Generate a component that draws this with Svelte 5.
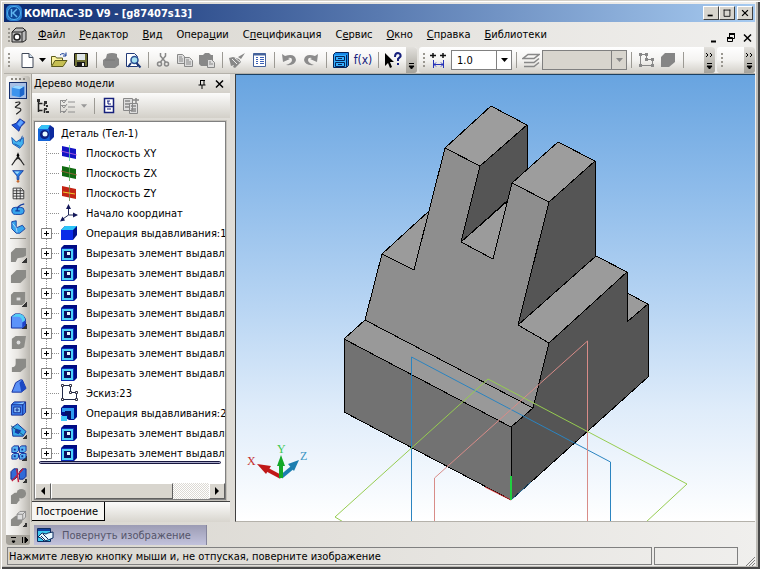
<script>
  const menus = [
    ['', 'Ф', 'айл'],
    ['', 'Р', 'едактор'],
    ['', 'В', 'ид'],
    ['Опера', 'ц', 'ии'],
    ['С', 'п', 'ецификация'],
    ['С', 'е', 'рвис'],
    ['', 'О', 'кно'],
    ['', 'С', 'правка'],
    ['', 'Б', 'иблиотеки']
  ];

  const standard = [
    ['new', 'Создать'],
    ['drop', 'Список шаблонов'],
    ['open', 'Открыть'],
    ['save', 'Сохранить'],
    null,
    ['print', 'Печать'],
    ['preview', 'Предварительный просмотр'],
    null,
    ['cut', 'Вырезать'],
    ['copy', 'Копировать'],
    ['paste', 'Вставить'],
    null,
    ['brush', 'Копировать свойства'],
    ['props', 'Свойства'],
    null,
    ['undo', 'Отменить'],
    ['redo', 'Повторить'],
    null,
    ['library', 'Менеджер библиотек'],
    ['fx', 'Переменные'],
    null,
    ['help', 'Справка']
  ];

  const panels = [
    ['part', 'Редактирование детали'],
    ['curve', 'Пространственные кривые'],
    ['surface', 'Поверхности'],
    ['aux', 'Вспомогательная геометрия'],
    ['measure', 'Измерения'],
    ['filter', 'Фильтры'],
    ['spec', 'Спецификация'],
    ['elements', 'Элементы оформления'],
    ['sheet', 'Листовое тело']
  ];

  const operations = [
    ['extrude', 'Операция выдавливания', true],
    ['block', 'Деталь-заготовка', false],
    ['hole', 'Вырезать', true],
    ['fillet', 'Скругление', true],
    ['hole2', 'Отверстие', false],
    ['rib', 'Ребро жесткости', false],
    ['draft', 'Уклон', false],
    ['shell', 'Оболочка', false],
    ['section', 'Сечение', true],
    ['array', 'Массив', true],
    ['mirror', 'Зеркальный массив', true],
    ['boolean', 'Булева операция', false],
    ['detail', 'Новая деталь', true]
  ];

  const cut = { icon: 'cutex', label: 'Вырезать элемент выдавливания', open: true };

  const tree = [
    { icon: 'xy', label: 'Плоскость XY' },
    { icon: 'zx', label: 'Плоскость ZX' },
    { icon: 'zy', label: 'Плоскость ZY' },
    { icon: 'origin', label: 'Начало координат' },
    { icon: 'boss', label: 'Операция выдавливания:1', open: true },
    cut, cut, cut, cut, cut, cut, cut,
    { icon: 'sketch', label: 'Эскиз:23' },
    { icon: 'bossadd', label: 'Операция выдавливания:2', open: true },
    cut, cut
  ];

  let step = '1.0';
  let active = 'part';
</script>

{#snippet icon(name)}
  <svg class="icon" viewBox="0 0 18 18" aria-hidden="true"><use href="#{name}" /></svg>
{/snippet}

<svg class="sprite" aria-hidden="true">
  <symbol id="new" viewBox="0 0 18 18"><path d="M4 2.500h7l4 4v10H4z" fill="#fff" stroke="#404858" /><path d="M11 2.500v4h4" fill="#cde" stroke="#404858" /></symbol>
  <symbol id="drop" viewBox="0 0 18 18"><path d="M5 7h7l-3.500 4z" /></symbol>
  <symbol id="open" viewBox="0 0 18 18"><path d="M1.500 14.500v-9h4l1 1.500h6v3" fill="#fbf3a0" stroke="#5b5a1c" /><path d="M1.500 15.500l3.500-6h12l-4 6z" fill="#c6bf52" stroke="#5b5a1c" /><path d="M10 4q3-3 6 .5M16 1.500v3.500h-3" fill="none" stroke="#123a96" /></symbol>
  <symbol id="save" viewBox="0 0 18 18"><path d="M2.500 2.500h13v13h-12l-1-1z" fill="#6f7034" stroke="#111" /><path d="M5 3h8v6H5z" fill="#dfe6e8" /><path d="M5 11h8v5H5z" fill="#181818" /><path d="M10 12h2v3h-2z" fill="#eee" /></symbol>
  <symbol id="print" viewBox="0 0 18 18"><path d="M5 3q5-2 10 0v3l2 2v6l-4 3H3l-2-3V9l3-2z" fill="#888" /><path d="M3 9h10" stroke="#777" /></symbol>
  <symbol id="preview" viewBox="0 0 18 18"><path d="M2.500 2.500h8l3 3v10h-11z" fill="#fff" stroke="#223a78" /><circle cx="10.500" cy="9" r="3.500" fill="#a9e2f2" stroke="#2b5196" stroke-width="1.500" /><path d="M12.500 12l4 4.500M7 12l-3 4" stroke="#1c3878" stroke-width="2" /></symbol>
  <symbol id="cut" viewBox="0 0 18 18"><path d="M6.500 2v3l5 6M11.500 2v3l-5 6" fill="none" stroke="#888" stroke-width="1.500" /><circle cx="5.500" cy="13" r="2" fill="none" stroke="#888" stroke-width="1.500" /><circle cx="12.500" cy="13" r="2" fill="none" stroke="#888" stroke-width="1.500" /></symbol>
  <symbol id="copy" viewBox="0 0 18 18"><path d="M1.500 3.500h5l2 2v7h-7zM8.500 6.500h5l3 3v6h-8z" fill="#ddd" stroke="#888" /><path d="M3 6h3M3 8h4M3 10h4M10 9h3M10 11h5M10 13h5" stroke="#888" /></symbol>
  <symbol id="paste" viewBox="0 0 18 18"><path d="M1 4h4l2-2h4l2 2h2v11H3l-2-2z" fill="#888" /><path d="M9.500 8.500h4l3 3v5h-7z" fill="#ddd" stroke="#888" /><path d="M11 11h2M11 13h4" stroke="#888" /></symbol>
  <symbol id="brush" viewBox="0 0 18 18"><path d="M17 2l-4 6-3-2z" fill="#888" /><path d="M1 7l4-1 6 2 2 3-6 6-2-1 1-2-3 1z" fill="#888" /><path d="M4 8l5 5M7 7l5 4" stroke="#eee" /></symbol>
  <symbol id="props" viewBox="0 0 18 18"><path d="M3.500 2.500h12v13h-12z" fill="#fff" stroke="#45629b" /><path d="M3.500 3.500h12" stroke="#45629b" stroke-width="2" /><path d="M6 6.500h2M6 8.500h2M6 10.500h2M6 12.500h2M10 6.500h4M10 8.500h4M10 10.500h4M10 12.500h4" stroke="#3c62b8" /></symbol>
  <symbol id="undo" viewBox="0 0 18 18"><path d="M2 3l1 8 7-3-2-1q4-1 4 2t-6 5q9 1 10-5-1-7-11-4z" fill="#8b8b8b" /></symbol>
  <symbol id="redo" viewBox="0 0 18 18"><path d="M16 3l-1 8-7-3 2-1q-4-1-4 2t6 5q-9 1-10-5 1-7 11-4z" fill="#8b8b8b" /></symbol>
  <symbol id="library" viewBox="0 0 18 18"><path d="M1.500 3.500l2-2h13v13l-2 2h-13z" fill="#1688e8" stroke="#06245a" /><path d="M2 4h12v12H2z" fill="#36b0ff" /><path d="M3.500 5.500h9v4h-9zM3.500 11.500h9v4h-9zM6 7.500h4M6 13.500h4M14.500 4v12" fill="none" stroke="#06245a" /></symbol>
  <symbol id="help" viewBox="0 0 18 18"><path d="M1 2v13l3-3 2 5 2-1-2-5h4z" /><path d="M11 6q0-4 3-4 3 .5 2.500 3.500L14 8v2M14 12v2" fill="none" stroke="#16207c" stroke-width="2" /></symbol>
  <symbol id="step" viewBox="0 0 18 18"><path d="M1 4.500h6M4 2v5M11 4.500h6M14 2v5" stroke="#111" stroke-width="1.500" /><path d="M4.500 9v8M14.500 9v8M5 13.500h9M7 11.500l-2 2 2 2M12 11.500l2 2-2 2" fill="none" stroke="#2632b8" /></symbol>
  <symbol id="layers" viewBox="0 0 18 18"><path d="M6 3.500h11l-5 4H1zM2 11.500h10l5-4M2 15.500h10l5-4" fill="none" stroke="#888" stroke-width="1.500" /></symbol>
  <symbol id="contour" viewBox="0 0 18 18"><path d="M3.500 3.500h6v5h6v6h-12z" fill="none" stroke="#888" /><path d="M2 2h3v3H2zM8 2h3v3H8zM8 7h3v3H8zM14 7h3v3h-3zM14 13h3v3h-3zM2 13h3v3H2z" fill="#888" /></symbol>
  <symbol id="solid" viewBox="0 0 18 18"><path d="M2 6l4-4h10v9l-6 5H2z" fill="#858585" /></symbol>

  <symbol id="part" viewBox="0 0 18 18"><path d="M2 5l4-2 10 1v9l-5 3-9-2z" fill="#3c94ee" /><path d="M2 5l4-2 10 1-5 3z" fill="#9ad8ff" /><path d="M11 7l5-3v9l-5 3z" fill="#1d65ca" /></symbol>
  <symbol id="curve" viewBox="0 0 18 18"><path d="M6 3q6-2 5 1l-5 4q0 1 3 1 4 0 3 3l-5 4" fill="none" stroke="#222" stroke-width="1.300" /></symbol>
  <symbol id="surface" viewBox="0 0 18 18"><path d="M2 9l5-2 4-5 6 4-5 5-2 5z" fill="#1f57db" stroke="#122a88" /><path d="M8 8l4-5 3 3-4 5z" fill="#5fa4ff" /></symbol>
  <symbol id="aux" viewBox="0 0 18 18"><path d="M2 4l5 5 8-5v7l-4 5-8-5z" fill="#42b3ef" stroke="#1651ad" /><path d="M14 2l-3 7M5 11l6 3" stroke="#1651ad" /></symbol>
  <symbol id="measure" viewBox="0 0 18 18"><path d="M9 2v4M9 6L2 16M9 6l7 10M5 11l4-3 4 3" fill="none" stroke="#222" stroke-width="1.300" /><circle cx="9" cy="5" r="1.500" /></symbol>
  <symbol id="filter" viewBox="0 0 18 18"><path d="M3 3h12l-5 6v4H8V9z" fill="#2d83e6" stroke="#123b9e" /><path d="M5 4h6L8 7z" fill="#9dddfc" /><circle cx="9" cy="15" r="1.500" fill="#c66a30" /></symbol>
  <symbol id="spec" viewBox="0 0 18 18"><path d="M3.500 3.500h9l3 3v9h-12zM3.500 6.500h12M3.500 9.500h12M3.500 12.500h12M7.500 4v12M11.500 4v12" fill="#eee" stroke="#333" /></symbol>
  <symbol id="elements" viewBox="0 0 18 18"><path d="M2 9q0-3 4-3h6q4 0 4 4t-4 4H6q-4 0-4-5z" fill="#39a6ed" stroke="#123b9e" /><path d="M8 10q-1-6 8-8M6 10h5" fill="none" stroke="#123b9e" stroke-width="1.500" /></symbol>
  <symbol id="sheet" viewBox="0 0 18 18"><path d="M2 3l5-1v8l7-3 3 4-6 5H7l-5-5z" fill="#39a6ed" stroke="#123b9e" /><path d="M7 10l-4-5M7 10l1 5" stroke="#bdf" /></symbol>
  <symbol id="extrude" viewBox="0 0 18 18"><path d="M1 7l5-5h11v8l-3 2-6 1-2 4H1z" fill="#8b8b87" /></symbol>
  <symbol id="block" viewBox="0 0 18 18"><path d="M1 8l6-6h10v8l-6 6H1z" fill="#8b8b87" /></symbol>
  <symbol id="hole" viewBox="0 0 18 18"><path d="M1 5l3-3h12v11l-3 3H1z" fill="#8b8b87" /><path d="M7 8h4v3H7z" fill="#ddd" /></symbol>
  <symbol id="fillet" viewBox="0 0 18 18"><path d="M1.500 5l4-3h5q6 2 6 8v4l-3 3h-12z" fill="#5c93fa" stroke="#102c9a" /><path d="M2 5l4-3h5q5 2 5 7l-3 2q0-6-5-6z" fill="#53cdf4" /><path d="M13 11l3-2v5l-3 3z" fill="#1f44cb" /></symbol>
  <symbol id="hole2" viewBox="0 0 18 18"><path d="M2 5l4-3h11l-2 12-4 2H2z" fill="#8b8b87" /><circle cx="9" cy="9" r="2" fill="#ddd" /></symbol>
  <symbol id="rib" viewBox="0 0 18 18"><path d="M6 3h11v9l-6 5H2v-5q4 0 4-4z" fill="#8b8b87" /></symbol>
  <symbol id="draft" viewBox="0 0 18 18"><path d="M2 15L6 5l5-3h2l4 9-5 4z" fill="#5b91f6" stroke="#132e9c" /><path d="M13 2l4 9-5 4-2-10z" fill="#1c49c4" /></symbol>
  <symbol id="shell" viewBox="0 0 18 18"><path d="M1.500 5l3-3h12v11l-3 3h-12z" fill="#3f82ee" stroke="#10278e" /><path d="M4 7.500h7v6H4zM6.500 9.500h2v2h-2zM13.500 5v11M2 5h12l2-3" fill="#8fc9ff" stroke="#10278e" /></symbol>
  <symbol id="section" viewBox="0 0 18 18"><path d="M2 6l6-4 9 8-3 5H3z" fill="#38a9e8" stroke="#143096" /><path d="M6 7l6 2-3 4-4-2z" fill="#1438ac" /><path d="M1 4l13 10" stroke="#174f76" /></symbol>
  <symbol id="array" viewBox="0 0 18 18"><path d="M2 4l2-2h5v5l-2 2H2zM10 4l2-2h5v5l-2 2h-5zM2 12l2-2h5v4l-2 2H2zM10 12l2-2h5v4l-2 2h-5z" fill="#58b5f3" stroke="#122c98" /><path d="M4 6h2M12 6h2M4 13h2M12 13h2" stroke="#122c98" stroke-width="2" /></symbol>
  <symbol id="mirror" viewBox="0 0 18 18"><path d="M1 6l3-3h4v8l-3 3H1zM10 6l3-3h4v8l-3 3h-4z" fill="#306bd8" stroke="#122684" /><path d="M2 16L14 3M7 3l2 14" stroke="#c02040" stroke-width="1.500" /></symbol>
  <symbol id="boolean" viewBox="0 0 18 18"><path d="M1 8l4-3h5v8l-3 4H1z" fill="#8b8b87" /><circle cx="12" cy="6" r="5" fill="#8b8b87" /></symbol>
  <symbol id="detail" viewBox="0 0 18 18"><path d="M1 10l5-4h7v7l-4 4H1z" fill="#8b8b87" /><path d="M7.500 4.500l3-3h6v6l-3 3h-6zM7.500 4.500h6v6M13.500 4.500l3-3" fill="#ddd" stroke="#888" /></symbol>

  <symbol id="root" viewBox="0 0 18 18"><path d="M1 5l4-4h8l4 3v9l-4 4H1z" fill="#0d2a9e" /><path d="M1 5h11l1 12H1z" fill="#1464d8" /><path d="M1 5l4-4h8l-2 4z" fill="#35c2f6" /><circle cx="7.500" cy="10.500" r="4.500" fill="#0b1f80" /><circle cx="8" cy="10" r="2.500" fill="#e6fbff" /></symbol>
  <symbol id="xy" viewBox="0 0 18 18"><path d="M2 2l14 3v10L2 12z" fill="#1414c4" /><path d="M9.500 1v16" stroke="#5fd0a0" stroke-width=".8" /><path d="M1 7l16 4" stroke="#c86ae0" stroke-width=".8" /></symbol>
  <symbol id="zx" viewBox="0 0 18 18"><path d="M2 2l14 3v10L2 12z" fill="#126a12" /><path d="M9.500 1v16" stroke="#4fae4f" stroke-width=".8" /><path d="M1 7l16 4" stroke="#b06040" stroke-width=".8" /></symbol>
  <symbol id="zy" viewBox="0 0 18 18"><path d="M2 2l14 3v10L2 12z" fill="#c32414" /><path d="M9.500 1v16" stroke="#6c8a50" stroke-width=".8" /><path d="M3 8l12 2" stroke="#f2cc30" /></symbol>
  <symbol id="origin" viewBox="0 0 18 18"><path d="M8.500 2v9h8M8.500 11l-7 5" fill="none" stroke="#222a58" /><path d="M8.500 0L6 5h5zM18 11l-5-2.500v5zM0 17.500l5-1-2.500-4z" fill="#14185a" /></symbol>
  <symbol id="boss" viewBox="0 0 18 18"><path d="M1 6l4-4h12v9l-4 5H1z" fill="#00108c" /><path d="M1 6l4-4h12l-4 4z" fill="#2cc4f8" /><path d="M1 6h12v10H1z" fill="#0a2ce8" /></symbol>
  <symbol id="cutex" viewBox="0 0 18 18"><path d="M1 4l3-3h13v13l-3 3H1z" fill="#000c84" /><path d="M1 4h13v13H1z" fill="#0b2cb4" /><path d="M3 6h9v9H3z" fill="#060c60" stroke="#4fd2fa" stroke-width="2" /><path d="M7 8h3v3H7z" fill="#e8faff" /></symbol>
  <symbol id="bossadd" viewBox="0 0 18 18"><path d="M1 4l3-3h13v12l-3 3H9L1 11z" fill="#00108c" /><path d="M2 4h12v11H9V8H2z" fill="#2f9cf0" /><path d="M5 7h6v8H8v-4H5z" fill="#061064" /><path d="M1 12h6v5H1z" fill="#3fc8f8" /></symbol>
  <symbol id="sketch" viewBox="0 0 18 18"><path d="M2.500 1.500h8v7h6v7h-14z" fill="none" stroke="#222a4a" /><path d="M1.500 .500h2v2h-2zM9.500 .500h2v2h-2zM9.500 7.500h2v2h-2zM15.500 7.500h2v2h-2zM15.500 14.500h2v2h-2zM1.500 14.500h2v2h-2z" fill="#fff" stroke="#334" /></symbol>
  <symbol id="treeview" viewBox="0 0 18 18"><path d="M4.500 3v12M4.500 6.500h4M4.500 13.500h4M10.500 6v3M10.500 12v4" fill="none" stroke="#222" stroke-width="1.500" /><path d="M3 2h3v3H3zM10 4h3v3h-3zM12 8h2v2h-2zM10 11h3v2h-3zM12 14h3v2h-3z" fill="#333" /></symbol>
  <symbol id="checks" viewBox="0 0 18 18"><path d="M1.500 3v13M2 3.500h5M2 8.500h5M2 14.500h5M9 5h7M9 10h7M9 15h7" stroke="#909090" /><path d="M3 4l2 2 3-4M3 9l2 2 3-4M3 14l2 2 3-4" fill="none" stroke="#909090" /></symbol>
  <symbol id="doc" viewBox="0 0 18 18"><path d="M4.500 1.500h9v14h-9zM4.500 9.500h9" fill="#fff" stroke="#16207c" stroke-width="1.500" /><path d="M7 4h3M8 4v3h3M7 12h4" fill="none" stroke="#16207c" /></symbol>
  <symbol id="report" viewBox="0 0 18 18"><path d="M1.500 1.500h9v12h-9zM7.500 6.500h8v10h-8z" fill="#ddd" stroke="#888" /><path d="M3 4h5M3 7h5M3 10h5M9 9h5M9 12h5M9 14h5M14 1v5M11 3h6" stroke="#888" stroke-width="1.500" /></symbol>
</svg>

<div class="window">
  <header class="titlebar">
    <svg class="logo" viewBox="0 0 16 16" aria-hidden="true">
      <rect width="16" height="16" rx="5" fill="#2b7fd0" />
      <circle cx="8" cy="8" r="6.500" fill="#0d4597" stroke="#4db0ef" />
      <path d="M5.500 4v8M11 4L7 8l4 4" fill="none" stroke="#61b6f0" stroke-width="1.500" />
    </svg>
    <h1>КОМПАС-3D V9 - [g87407s13]</h1>
    <div class="window-buttons">
      <button aria-label="Свернуть"><svg viewBox="0 0 12 10"><path d="M2 8h6" stroke="#000" stroke-width="2" /></svg></button>
      <button aria-label="Развернуть"><svg viewBox="0 0 12 10"><path d="M2 1.500h8M2.500 1v8h7V1" fill="none" stroke="#000" /></svg></button>
      <button class="close" aria-label="Закрыть"><svg viewBox="0 0 12 10"><path d="M2.500 1.500l7 7M9.500 1.500l-7 7" stroke="#000" stroke-width="1.500" /></svg></button>
    </div>
  </header>

  <nav class="menubar">
    <i class="grip"></i>
    <svg class="doc-icon" viewBox="0 0 16 16" aria-hidden="true">
      <path d="M1 5l4-4h7l3 3v9l-3 2H1z" fill="#bbb" stroke="#222" />
      <path d="M1 5h10v10M11 5l4-2" fill="none" stroke="#222" />
      <circle cx="6" cy="10" r="3" fill="#fff" stroke="#222" stroke-width="1.500" />
    </svg>
    {#each menus as [before, key, after]}
      <button class="menu">{before}<u>{key}</u>{after}</button>
    {/each}
    <div class="mdi-buttons">
      <button aria-label="Свернуть документ"><svg viewBox="0 0 10 10"><path d="M1 8.500h5" stroke="#000" stroke-width="2" /></svg></button>
      <button aria-label="Восстановить документ"><svg viewBox="0 0 10 10"><path d="M3 1h6M1 5h5" stroke="#000" stroke-width="2" /><path d="M3.500 4V1.500h5v4H7M1.500 4.500h5v4h-5z" fill="none" stroke="#000" /></svg></button>
      <button aria-label="Закрыть документ"><svg viewBox="0 0 10 10"><path d="M2 1.500l7 7M9 1.500l-7 7" stroke="#000" stroke-width="1.500" /></svg></button>
    </div>
  </nav>

  <div class="toolbars">
    <div class="toolbar standard">
      <i class="grip"></i>
      {#each standard as item}
        {#if !item}
          <i class="separator"></i>
        {:else if item[0] === 'fx'}
          <button class="tool fx" title={item[1]}>f(x)</button>
        {:else}
          <button class="tool {item[0]}" aria-label={item[1]}>{@render icon(item[0])}</button>
        {/if}
      {/each}
      <button class="more" aria-label="Другие кнопки"><svg viewBox="0 0 9 22"><path d="M2 14.500h5M2 17h5l-2.500 3z" stroke="#000" /></svg></button>
    </div>
    <div class="toolbar state">
      <i class="grip"></i>
      <button class="tool" aria-label="Шаг курсора">{@render icon('step')}</button>
      <div class="combo step">
        <select bind:value={step} aria-label="Текущий шаг курсора"><option>1.0</option><option>5.0</option></select>
        <svg viewBox="0 0 14 18"><path d="M4 7h7l-3.500 4z" /></svg>
      </div>
      <i class="separator"></i>
      <button class="tool" aria-label="Слои">{@render icon('layers')}</button>
      <div class="combo layer">
        <select disabled aria-label="Текущий слой"><option></option></select>
        <svg viewBox="0 0 14 18"><path d="M4 7h7l-3.500 4z" fill="#888" /></svg>
      </div>
      <i class="separator"></i>
      <button class="tool" aria-label="Эскиз">{@render icon('contour')}</button>
      <button class="tool" aria-label="Тело">{@render icon('solid')}</button>
      <i class="separator"></i>
      <button class="more" aria-label="Другие кнопки"><svg viewBox="0 0 9 22"><path d="M1 4l2 2-2 2M5 4l2 2-2 2" fill="none" stroke="#000" /><path d="M2 14.500h5M2 17h5l-2.500 3z" stroke="#000" /></svg></button>
    </div>
    <div class="toolbar view">
      <i class="grip"></i>
      <button class="more" aria-label="Другие кнопки"><svg viewBox="0 0 9 22"><path d="M1 4l2 2-2 2M5 4l2 2-2 2" fill="none" stroke="#000" /><path d="M2 14.500h5M2 17h5l-2.500 3z" stroke="#000" /></svg></button>
    </div>
  </div>

  <div class="body">
    <aside class="compact">
      <i class="dots"></i>
      {#each panels as [name, label]}
        <button class="panel-button" class:active={active === name} aria-label={label} on:click={() => (active = name)}>{@render icon(name)}</button>
      {/each}
      <i class="rule"></i>
      {#each operations as [name, label, more]}
        <button class="op-button" class:has-more={more} aria-label={label}>{@render icon(name)}</button>
      {/each}
      <div class="compact-end">
        <svg viewBox="0 0 24 10" aria-hidden="true"><path d="M5 2.500h5M6 6h3l-1.500 2zM16.500 2v6M19 2l3 3-3 3z" stroke="#000" /></svg>
      </div>
    </aside>

    <div class="work">
      <div class="split">
        <section class="tree-panel">
          <div class="panel-title">
            <h2>Дерево модели</h2>
            <button aria-label="Закрепить"><svg viewBox="0 0 10 10"><path d="M3 1.500h5M3.500 1v5M7 1v5M1.500 6h7M5 6v4" fill="none" stroke="#000" /></svg></button>
            <button aria-label="Закрыть панель"><svg viewBox="0 0 10 10"><path d="M2 1.500l7 7M9 1.500l-7 7" stroke="#000" stroke-width="1.500" /></svg></button>
          </div>
          <div class="panel-tools">
            <button class="tool" aria-label="Отображение структуры">{@render icon('treeview')}</button>
            <button class="tool wide" aria-label="Состав дерева">{@render icon('checks')}<svg class="tiny" viewBox="0 0 8 4"><path d="M0 0h7L3.500 4z" fill="#999" /></svg></button>
            <i class="separator"></i>
            <button class="tool" aria-label="Дополнительное окно">{@render icon('doc')}</button>
            <button class="tool" aria-label="Отношения">{@render icon('report')}</button>
          </div>
          <div class="tree">
            <div class="tree-scroll">
              <div class="root-row">{@render icon('root')}<span>Деталь (Тел-1)</span></div>
              <ul>
                {#each tree as node}
                  <li>
                    {#if node.open}
                      <button class="expander" aria-label="Развернуть узел"><svg viewBox="0 0 11 11"><path d="M.5.5h10v10H.5z" fill="#fff" stroke="#808080" /><path d="M3 5.500h5M5.500 3v5" stroke="#000" /></svg></button>
                    {:else}
                      <i class="joint"></i>
                    {/if}
                    <i class="branch"></i>
                    {@render icon(node.icon)}
                    <span>{node.label}</span>
                  </li>
                {/each}
              </ul>
              <div class="end-line"></div>
            </div>
            <div class="scrollbar">
              <button aria-label="Прокрутить влево"><svg viewBox="0 0 8 8"><path d="M6 0v8L2 4z" /></svg></button>
              <div class="track"><div class="thumb"></div></div>
              <button aria-label="Прокрутить вправо"><svg viewBox="0 0 8 8"><path d="M2 0v8l4-4z" /></svg></button>
            </div>
          </div>
          <div class="tabs"><button class="tab">Построение</button></div>
        </section>

        <main class="viewport">
          <svg viewBox="236 75 519 447" preserveAspectRatio="xMinYMin slice" role="img" aria-label="Модель детали">
            <g stroke="#000" stroke-linejoin="round" shape-rendering="crispEdges">
              <path d="M382 254L429 211L414 270z" fill="#9b9b9b" />
              <path d="M461 242L510 199L493 259z" fill="#9b9b9b" />
              <path d="M527 125V170L512 184L508 200L461 242L480 166z" fill="#555" />
              <path d="M491 106L527 125L480 166L445 148z" fill="#9d9d9d" />
              <path d="M595 161L596 256L518 325L549 202z" fill="#555" />
              <path d="M558 142L595 161L549 202L512 183z" fill="#9d9d9d" />
              <path d="M627 293L648 304L627 322z" fill="#9b9b9b" />
              <path d="M445 148L480 166L461 242L493 259L512 183L549 202L518 325L549 343L533 408L365 320L382 254L414 270z" fill="#8e8e8e" />
              <path d="M518 325L596 256L627 272L549 343z" fill="#9b9b9b" />
              <path d="M549 343L627 272V322L648 304V377L511 500V427L533 408z" fill="#555" />
              <path d="M344 339L365 320L533 408L511 427z" fill="#999" />
              <path d="M344 339L511 427V500L344 412z" fill="#727272" />
            </g>
            <g fill="none">
              <path d="M411.500 523V357L610.500 462V523" stroke="#2b84c0" />
              <path d="M434.500 523V478L587.500 341V523" stroke="#d88c88" />
              <path d="M345 523L335 517L488 379L687 484L645 523" stroke="#96cc50" />
              <path d="M511 500L485 487" stroke="#d03030" />
              <path d="M511 500L531 482" stroke="#2b6f9c" />
              <path d="M511 500V476" stroke="#20d040" stroke-width="2" />
            </g>
            <g class="axes">
              <path d="M281 477L266 469" stroke="#c01818" stroke-width="4" />
              <path d="M257 464L271 466L266 474z" fill="#c01818" />
              <path d="M281 477L293 467" stroke="#1c7eb0" stroke-width="4" />
              <path d="M299 460L288 464L294 471z" fill="#1c7eb0" />
              <path d="M281 478V463" stroke="#14a828" stroke-width="4" />
              <path d="M281 455L277 466H285z" fill="#14a828" />
              <text x="247" y="465" fill="#c43030">X</text>
              <text x="277" y="453" fill="#3cc850">Y</text>
              <text x="300" y="460" fill="#3c96c4">Z</text>
            </g>
          </svg>
        </main>
      </div>

      <div class="property-bar">
        <button class="property-tab">
          <svg viewBox="0 0 17 16" aria-hidden="true"><path d="M.5 1.500h13v13H.5z" fill="#3cc8f0" stroke="#0c2c60" /><path d="M1 2h12v2H1z" fill="#1040a0" /><path d="M1 10l4-4 4 1 2-1 5-1v6l-5 2-4 1-3-3z" fill="#e8f8ff" stroke="#0c2c60" /><path d="M4 9l4 4M6 7l5 5" stroke="#0c2c60" /></svg>
          Повернуть изображение
        </button>
      </div>
    </div>
  </div>

  <footer class="statusbar">
    <p>Нажмите левую кнопку мыши и, не отпуская, поверните изображение</p>
    <div class="status-cell"></div>
    <svg class="resize" viewBox="0 0 10 10" aria-hidden="true"><path d="M1 10l9-9M4 10l6-6M7 10l3-3" stroke="#808080" /></svg>
  </footer>
</div>

<style>
  :global(body) {
    margin: 0;
    background: #d8d5ce;
  }
  .window {
    box-sizing: border-box;
    height: 100vh;
    min-height: 560px;
    display: flex;
    flex-direction: column;
    padding: 4px 5px 3px 4px;
    overflow: hidden;
    font: 11px 'DejaVu Sans Condensed', 'DejaVu Sans', sans-serif;
    color: #000;
    background: linear-gradient(90deg, #d8d5ce, #f0efed);
    box-shadow: inset 1px 1px #d4d0c8, inset 2px 2px #fff, inset -2px -2px #484848, inset -4px -3px #bcbab5;
  }
  button {
    padding: 0;
    border: 0;
    background: none;
    font: inherit;
    color: inherit;
  }
  svg {
    display: block;
  }
  .sprite {
    position: absolute;
    width: 0;
    height: 0;
  }
  .icon {
    flex: none;
    width: 18px;
    height: 18px;
  }
  .grip {
    flex: none;
    width: 2px;
    height: 14px;
    margin: 0 6px 0 4px;
    background: repeating-linear-gradient(#9a9790 0 2px, transparent 2px 4px);
  }
  .separator {
    flex: none;
    width: 1px;
    height: 16px;
    margin: 0 3px 0 4px;
    background: #9c9a94;
  }

  .titlebar {
    flex: none;
    height: 18px;
    display: flex;
    align-items: center;
    gap: 2px;
    padding: 0 2px;
    background: linear-gradient(90deg, #0c2a70, #a6caf0);
  }
  .logo {
    width: 16px;
    height: 16px;
  }
  .titlebar h1 {
    flex: 1;
    margin: 0;
    font-size: 11px;
    font-weight: bold;
    color: #fff;
  }
  .window-buttons {
    display: flex;
  }
  .window-buttons button {
    box-sizing: border-box;
    width: 16px;
    height: 14px;
    padding: 1px 2px;
    background: #d8d5ce;
    border: 1px solid;
    border-color: #fff #404040 #404040 #fff;
  }
  .window-buttons svg {
    width: 10px;
    height: 10px;
  }
  .window-buttons .close {
    margin-left: 2px;
  }

  .menubar {
    flex: none;
    height: 25px;
    display: flex;
    align-items: center;
  }
  .doc-icon {
    width: 16px;
    height: 16px;
    margin-right: 11px;
  }
  .menubar .grip {
    margin-right: 1px;
  }
  .menu {
    margin-right: 14px;
  }
  .mdi-buttons {
    display: flex;
    gap: 6px;
    margin: 6px 3px 0 auto;
  }
  .mdi-buttons svg,
  .panel-title svg {
    width: 10px;
    height: 10px;
  }

  .toolbars {
    flex: none;
    height: 26px;
    display: flex;
    gap: 2px;
    border-bottom: 1px solid #b4b1aa;
  }
  .toolbar {
    display: flex;
    align-items: center;
    background: linear-gradient(#fff, #f4f3f1 50%, #d3d0c9);
    border-radius: 3px;
  }
  .toolbar.state {
    flex: 1;
  }
  .toolbar.view {
    width: 38px;
  }
  .tool {
    flex: none;
    width: 22px;
    height: 22px;
    display: flex;
    align-items: center;
    justify-content: center;
  }
  .tool.drop {
    width: 10px;
  }
  .tool.fx {
    font-size: 12px;
    color: #14207c;
  }
  .more {
    align-self: stretch;
    width: 11px;
    margin-left: auto;
    padding: 1px;
    background: linear-gradient(#e2e0dc, #a5a29a);
    border-radius: 0 3px 3px 0;
  }
  .standard .more {
    margin-left: 2px;
  }
  .more svg {
    width: 9px;
    height: 22px;
  }
  .state .grip {
    margin-right: 2px;
  }
  .combo {
    box-sizing: border-box;
    height: 20px;
    display: grid;
    background: #fff;
    border: 1px solid #808080;
  }
  .combo.step {
    width: 61px;
    margin-left: 2px;
  }
  .combo.layer {
    width: 85px;
    background: #d8d5ce;
  }
  .combo select {
    grid-area: 1 / 1;
    appearance: none;
    margin: 0;
    padding: 0 16px 0 5px;
    border: 0;
    background: none;
    font: inherit;
    color: #000;
  }
  .combo svg {
    grid-area: 1 / 1;
    justify-self: end;
    width: 14px;
    height: 18px;
    border-left: 1px solid #808080;
    pointer-events: none;
  }

  .body {
    flex: 1;
    min-height: 0;
    display: flex;
  }
  .compact {
    flex: none;
    width: 24px;
    margin: 2px 1px 1px 2px;
    display: flex;
    flex-direction: column;
    align-items: center;
    background: linear-gradient(90deg, #fbfbfa, #e8e6e2 50%, #b9b6af);
    border-radius: 3px;
    overflow: hidden;
  }
  .dots {
    flex: none;
    width: 14px;
    height: 2px;
    margin: 2px 0;
    background: repeating-linear-gradient(90deg, #8c8982 0 2px, transparent 2px 4px);
  }
  .panel-button {
    box-sizing: border-box;
    flex: none;
    width: 18px;
    height: 17px;
  }
  .panel-button .icon {
    width: 16px;
    height: 16px;
    margin: 0 auto;
  }
  .panel-button.active {
    background: #a8bfe4;
    outline: 1px solid #16306e;
    outline-offset: -1px;
  }
  .rule {
    flex: none;
    width: 16px;
    height: 1px;
    margin: 3px 0;
    background: #8c8982;
  }
  .op-button {
    flex: none;
    width: 20px;
    height: 22px;
    padding-top: 2px;
  }
  .op-button .icon {
    margin: 0 auto;
    width: 17px;
    height: 17px;
  }
  .has-more {
    background: linear-gradient(135deg, transparent 50%, #333 50%) right 1px bottom 1px / 5px 5px no-repeat;
  }
  .compact-end {
    align-self: stretch;
    margin-top: auto;
    height: 10px;
    background: #a5a29a;
  }
  .compact-end svg {
    width: 24px;
    height: 10px;
  }

  .work {
    flex: 1;
    min-width: 0;
    display: flex;
    flex-direction: column;
  }
  .split {
    flex: 1;
    min-height: 0;
    display: flex;
    gap: 5px;
  }
  .tree-panel {
    flex: none;
    width: 199px;
    display: flex;
    flex-direction: column;
    border-left: 1px solid #a5a29a;
    box-sizing: border-box;
  }
  .panel-title {
    flex: none;
    height: 19px;
    display: flex;
    align-items: center;
    gap: 7px;
    padding: 0 6px 0 2px;
    background: linear-gradient(#f2f1ef, #d3d0c9);
  }
  .panel-title h2 {
    flex: 1;
    margin: 0;
    font-size: 11px;
    font-weight: normal;
  }
  .panel-tools {
    flex: none;
    height: 25px;
    display: flex;
    align-items: center;
    background: linear-gradient(#fbfbfa, #d3d0c9);
  }
  .panel-tools .wide {
    width: 38px;
    gap: 4px;
  }
  .panel-tools .separator {
    margin-left: 2px;
  }
  .tiny {
    width: 7px;
    height: 4px;
  }
  .tree {
    flex: 1;
    min-height: 0;
    margin: 3px 4px 1px 2px;
    display: flex;
    flex-direction: column;
    background: #fff;
    border: 1px solid #808080;
    box-shadow: 0 0 0 1px #c4c1ba;
  }
  .tree-scroll {
    flex: 1;
    min-height: 0;
    overflow: hidden;
    padding: 1px 0 0;
  }
  .root-row,
  li {
    display: flex;
    align-items: center;
    height: 20px;
    white-space: nowrap;
  }
  .root-row {
    gap: 6px;
    padding-left: 2px;
  }
  ul {
    margin: 0;
    padding: 0;
    list-style: none;
  }
  li {
    padding-left: 6px;
    background: repeating-linear-gradient(#909090 0 1px, #fff 1px 2px) 11px 0 / 1px 20px no-repeat;
  }
  li .icon {
    margin-right: 8px;
  }
  li span {
    flex: 1;
    min-width: 0;
    overflow: hidden;
  }
  .expander,
  .joint {
    flex: none;
    width: 11px;
    height: 11px;
  }
  .expander svg {
    width: 11px;
    height: 11px;
  }
  .joint {
    height: 1px;
    background: repeating-linear-gradient(90deg, #909090 0 1px, transparent 1px 2px) 5px 0 no-repeat;
  }
  .branch {
    flex: none;
    width: 8px;
    height: 1px;
    background: repeating-linear-gradient(90deg, #909090 0 1px, transparent 1px 2px);
  }
  .end-line {
    height: 1px;
    margin: -2px 4px 0;
    position: relative;
    background: #a8a8c8;
    border: 1px solid #181840;
    border-radius: 2px;
  }
  .scrollbar {
    flex: none;
    height: 16px;
    display: flex;
  }
  .scrollbar button,
  .thumb {
    box-sizing: border-box;
    width: 16px;
    height: 16px;
    background: #d8d5ce;
    border: 1px solid;
    border-color: #fff #606060 #606060 #fff;
  }
  .scrollbar svg {
    width: 8px;
    height: 8px;
    margin: 0 auto;
  }
  .track {
    flex: 1;
    background: repeating-conic-gradient(#fff 0 25%, #dcd9d3 0 50%) 0 0 / 2px 2px;
  }
  .thumb {
    width: 77%;
  }
  .tabs {
    flex: none;
    height: 20px;
    border-top: 1px solid #404040;
    background: linear-gradient(#fbfbfa, #d8d5ce);
  }
  .tab {
    height: 19px;
    padding: 0 6px 0 4px;
    background: #f6f5f2;
    border: 1px solid #000;
    border-width: 0 1px 1px 0;
  }

  .viewport {
    flex: 1;
    min-width: 0;
    min-height: 0;
    border-left: 1px solid #404040;
    border-top: 1px solid #1c4060;
    border-bottom: 1px solid #b4b1aa;
    background: linear-gradient(#68a4e0, #8dbbea 25%, #b8d5f3 52%, #dfecfa 75%, #fff);
  }
  .viewport svg {
    width: 100%;
    height: 100%;
  }
  .axes text {
    font: 12px 'Liberation Serif', serif;
  }

  .property-bar {
    flex: none;
    height: 24px;
    padding: 3px 0 0 3px;
    box-sizing: border-box;
  }
  .property-tab {
    box-sizing: border-box;
    height: 20px;
    min-width: 173px;
    display: flex;
    align-items: center;
    gap: 8px;
    padding: 0 14px 0 3px;
    color: #55556a;
    background: linear-gradient(#9c9cb4, #c2c2dc);
    border-right: 1px solid #85859c;
  }
  .property-tab svg {
    width: 17px;
    height: 16px;
  }

  .statusbar {
    flex: none;
    height: 19px;
    display: flex;
    gap: 2px;
    padding: 0 0 0 3px;
    margin-top: 1px;
  }
  .statusbar p,
  .status-cell {
    box-sizing: border-box;
    height: 18px;
    margin: 0;
    border: 1px solid #808080;
  }
  .statusbar p {
    flex: 1;
    padding-left: 1px;
    line-height: 17px;
    white-space: nowrap;
  }
  .status-cell {
    width: 84px;
  }
  .resize {
    align-self: end;
    width: 10px;
    height: 10px;
    margin-left: 5px;
  }
</style>
